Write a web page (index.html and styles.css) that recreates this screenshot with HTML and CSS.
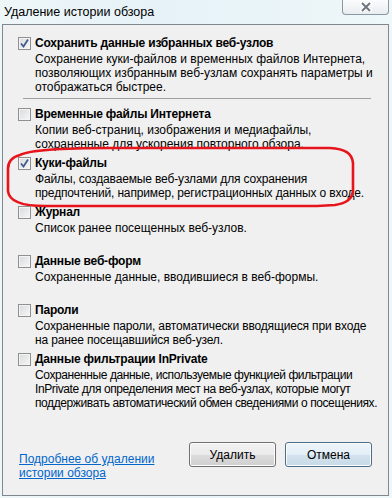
FILE: index.html
```html
<!DOCTYPE html>
<html lang="ru">
<head>
  <meta charset="UTF-8">
  <title>Удаление истории обзора</title>
  <link rel="stylesheet" href="styles.css">
</head>
<body>
  <div class="window">
    <div class="titlebar">
      <span class="title">Удаление истории обзора</span>
      <div class="close-btn">
        <svg width="12" height="10" viewBox="0 0 12 10">
          <path d="M2 1 L10 9 M10 1 L2 9" stroke="#ffffff" stroke-width="4" stroke-linecap="round"/>
          <path d="M2 1 L10 9 M10 1 L2 9" stroke="#6e7780" stroke-width="2"/>
        </svg>
      </div>
    </div>

    <div class="client">
      <div class="option first">
        <span class="check checked">
          <svg width="11" height="11" viewBox="0 0 11 11"><path d="M2 5.5 L4.5 8.5 L9 1.5" fill="none" stroke="#3f5a8c" stroke-width="1.8"/></svg>
        </span>
        <div class="text">
          <div class="name">Сохранить данные избранных веб-узлов</div>
          <div class="desc">Сохранение куки-файлов и временных файлов Интернета,<br>позволяющих избранным веб-узлам сохранять параметры и<br>отображаться быстрее.</div>
        </div>
      </div>

      <div class="separator"></div>

      <div class="option">
        <span class="check"></span>
        <div class="text">
          <div class="name">Временные файлы Интернета</div>
          <div class="desc">Копии веб-страниц, изображения и медиафайлы,<br>сохраненные для ускорения повторного обзора.</div>
        </div>
      </div>

      <div class="option highlighted">
        <span class="check checked">
          <svg width="11" height="11" viewBox="0 0 11 11"><path d="M2 5.5 L4.5 8.5 L9 1.5" fill="none" stroke="#3f5a8c" stroke-width="1.8"/></svg>
        </span>
        <div class="text">
          <div class="name">Куки-файлы</div>
          <div class="desc tight">Файлы, создаваемые веб-узлами для сохранения<br>предпочтений, например, регистрационных данных о входе.</div>
        </div>
        <svg class="marker" width="360" height="72" viewBox="0 0 360 72">
          <path d="M20 14 C32 8 70 7 110 7 L330 7 C345 8 352 12 353 22 L353 50 C352 58 347 62 335 64 L317 65 L45 65 C25 65 9 61 8 50 L8 28 C8 21 12 16 20 14" fill="none" stroke="#e8141c" stroke-width="2.6"/>
        </svg>
      </div>

      <div class="option">
        <span class="check"></span>
        <div class="text">
          <div class="name">Журнал</div>
          <div class="desc">Список ранее посещенных веб-узлов.</div>
        </div>
      </div>

      <div class="option">
        <span class="check"></span>
        <div class="text">
          <div class="name">Данные веб-форм</div>
          <div class="desc">Сохраненные данные, вводившиеся в веб-формы.</div>
        </div>
      </div>

      <div class="option">
        <span class="check"></span>
        <div class="text">
          <div class="name">Пароли</div>
          <div class="desc tight">Сохраненные пароли, автоматически вводящиеся при входе<br>на ранее посещавшийся веб-узел.</div>
        </div>
      </div>

      <div class="option">
        <span class="check"></span>
        <div class="text">
          <div class="name">Данные фильтрации InPrivate</div>
          <div class="desc tighter">Сохраненные данные, используемые функцией фильтрации<br>InPrivate для определения мест на веб-узлах, которые могут<br>поддерживать автоматический обмен сведениями о посещениях.</div>
        </div>
      </div>

      <div class="footer">
        <a class="help-link" href="#">Подробнее об удалении<br>истории обзора</a>
        <div class="buttons">
          <button class="btn">Удалить</button>
          <button class="btn focused">Отмена</button>
        </div>
      </div>
    </div>
  </div>
</body>
</html>
```

FILE: styles.css
```css
body {
  margin: 0;
  width: 392px;
  height: 498px;
  overflow: hidden;
  background: #e3f1f6;
  font-family: "Liberation Sans", Arial, sans-serif;
  font-size: 12px;
  color: #000;
}
.window {
  width: 392px;
  height: 498px;
  background: linear-gradient(90deg, #eef6f8 0%, #e6f2f8 40%, #eef7f9 100%);
}
.titlebar {
  height: 24px;
  display: flex;
  justify-content: space-between;
  align-items: flex-start;
}
.title {
  margin: 5px 0 0 4px;
  line-height: 14px;
  font-size: 12.5px;
}
.close-btn {
  width: 45px;
  height: 14px;
  margin-right: 3px;
  border: 1px solid #8b98a3;
  border-top: none;
  border-radius: 0 0 4px 4px;
  background: linear-gradient(#fbfcfd, #e9edf0);
  display: flex;
  justify-content: center;
  align-items: center;
}
.client {
  margin-left: 2px;
  width: 370px;
  height: 470px;
  border: 1px solid #7d8890;
  background: #f0f0f0;
  padding: 0 0 0 15px;
}
.option {
  display: flex;
  align-items: flex-start;
  height: 49px;
  position: relative;
}
.option.first {
  height: auto;
  padding-top: 11px;
}
.check {
  flex: none;
  width: 11px;
  height: 11px;
  margin-top: 1px;
  border: 1px solid #8e8f8f;
  background: linear-gradient(135deg, #d8dadd, #f7f7f7);
  box-shadow: inset 0 0 0 1px #f4f4f4;
  display: flex;
  align-items: center;
  justify-content: center;
}
.text {
  margin-left: 4px;
  white-space: nowrap;
}
.name {
  font-weight: bold;
  line-height: 14px;
  margin-bottom: 2px;
  letter-spacing: -0.2px;
}
.desc {
  line-height: 14px;
}
.desc.tight {
  letter-spacing: -0.15px;
}
.desc.tighter {
  letter-spacing: -0.4px;
}
.separator {
  height: 1px;
  background: #a0a0a0;
  margin: 4px 17px 8px 5px;
}
.marker {
  position: absolute;
  left: -18px;
  top: -15px;
}
.footer {
  display: flex;
  justify-content: space-between;
  align-items: flex-start;
  margin-top: 41px;
}
.help-link {
  color: #0066cc;
  line-height: 14px;
  margin: 10px 0 0 1px;
}
.buttons {
  display: flex;
  gap: 9px;
  margin-right: 16px;
}
.btn {
  width: 87px;
  height: 25px;
  font-family: "Liberation Sans", Arial, sans-serif;
  font-size: 12px;
  color: #000;
  border: 1px solid #707070;
  border-radius: 3px;
  background: linear-gradient(#f2f2f2 0%, #ebebeb 50%, #dddddd 51%, #cfcfcf 100%);
  box-shadow: inset 0 0 0 1px #fcfcfc;
  padding: 0;
}
.btn.focused {
  border-color: #4c6e88;
  background: linear-gradient(#eef5fa 0%, #e3eef6 50%, #d3e3ee 51%, #c8dae7 100%);
}
```
